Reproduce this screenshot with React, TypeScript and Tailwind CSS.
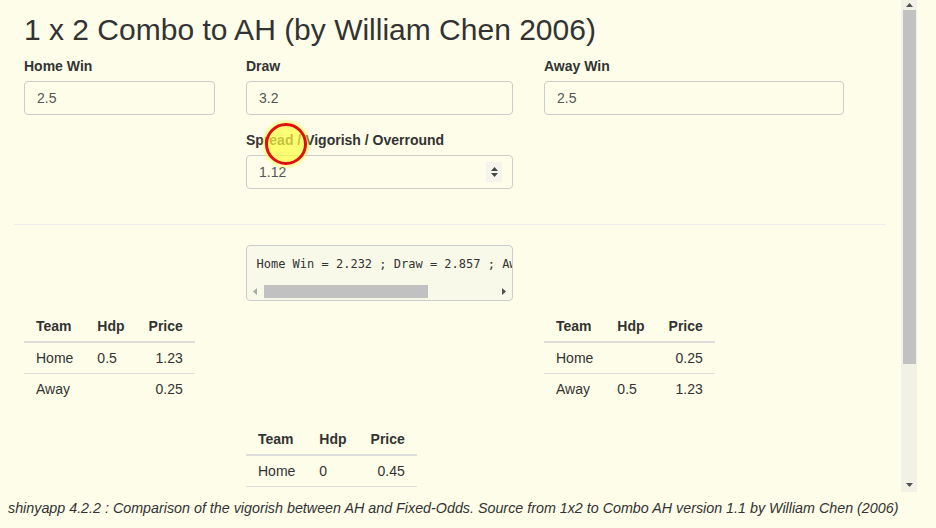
import React from "react";

type Row = [string, string, string];

const Label = ({ children }: { children: React.ReactNode }) => (
  <label className="block mb-[5px] text-[14px] leading-[20px] font-bold text-[#333]">
    {children}
  </label>
);

const TextInput = ({ value }: { value: string }) => (
  <input
    readOnly
    value={value}
    className="block h-[34px] w-full rounded-[4px] border border-[#ccc] bg-transparent px-[12px] text-[14px] text-[#555] outline-none"
  />
);

const Tri = ({ dir, color }: { dir: "up" | "down" | "left" | "right"; color: string }) => {
  const d = {
    up: "M0 4 L3.5 0 L7 4 Z",
    down: "M0 0 L3.5 4 L7 0 Z",
    left: "M4 0 L0 3.5 L4 7 Z",
    right: "M0 0 L4 3.5 L0 7 Z",
  }[dir];
  const w = dir === "up" || dir === "down" ? 7 : 4;
  const h = dir === "up" || dir === "down" ? 4 : 7;
  return (
    <svg width={w} height={h} viewBox={`0 0 ${w} ${h}`}>
      <path d={d} fill={color} />
    </svg>
  );
};

const OddsTable = ({ rows }: { rows: Row[] }) => (
  <table className="w-max self-start justify-self-start border-separate border-spacing-0 text-[14px] leading-[20px] text-[#333]">
    <thead>
      <tr>
        <th className="border-b-2 border-[#ddd] px-3 py-[5px] text-left font-bold">Team</th>
        <th className="border-b-2 border-[#ddd] px-3 py-[5px] text-left font-bold">Hdp</th>
        <th className="border-b-2 border-[#ddd] px-3 py-[5px] text-right font-bold">Price</th>
      </tr>
    </thead>
    <tbody>
      {rows.map((r, i) => (
        <tr key={i} className="h-[30px]">
          <td className={i > 0 ? "border-t border-[#ddd] px-3 py-[5px] text-left" : "px-3 py-[5px] text-left"}>
            {r[0]}
          </td>
          <td className={i > 0 ? "border-t border-[#ddd] px-3 py-[5px] text-left" : "px-3 py-[5px] text-left"}>
            {r[1]}
          </td>
          <td className={i > 0 ? "border-t border-[#ddd] px-3 py-[5px] text-right" : "px-3 py-[5px] text-right"}>
            {r[2]}
          </td>
        </tr>
      ))}
    </tbody>
  </table>
);

const App = () => {
  return (
    <div className="relative flex h-[528px] w-[936px] flex-col overflow-hidden bg-[#fdfde9] font-['Liberation_Sans',Arial,sans-serif] text-[#333]">
      <div className="flex h-[492px]">
        {/* page content */}
        <div className="w-[901px] overflow-hidden pl-[24px] pt-[13px]">
          <h2 className="text-[30px] leading-[33px] font-normal">1 x 2 Combo to AH (by William Chen 2006)</h2>

          <div className="mt-[10px] grid grid-cols-[191px_267px_300px] gap-x-[31px]">
            <div className="mb-[15px]">
              <Label>Home Win</Label>
              <TextInput value="2.5" />
            </div>
            <div className="mb-[15px]">
              <Label>Draw</Label>
              <TextInput value="3.2" />
            </div>
            <div className="mb-[15px]">
              <Label>Away Win</Label>
              <TextInput value="2.5" />
            </div>
          </div>

          <div className="grid grid-cols-[191px_267px_300px] gap-x-[31px]">
            <div />
            <div className="mb-[15px]">
              <Label>Spread / Vigorish / Overround</Label>
              <div className="flex h-[34px] items-center rounded-[4px] border border-[#ccc] pl-[12px] pr-[10px] text-[14px] text-[#555]">
                <span className="flex-1">1.12</span>
                <span className="flex h-[20px] w-[16px] flex-col items-center justify-center gap-[2px] bg-[#f4f4ec]">
                  <Tri dir="up" color="#444" />
                  <Tri dir="down" color="#444" />
                </span>
              </div>
            </div>
          </div>

          <hr className="my-[20px] ml-[-10px] w-[872px] border-t border-[#ececec]" />

          <div className="grid grid-cols-[191px_267px_300px] gap-x-[31px]">
            <div />
            <div className="mb-[10px] rounded-[4px] border border-[#ccc] bg-[#f9f9ea]">
              <div className="overflow-hidden whitespace-nowrap px-[9.5px] pt-[10px] pb-[10px] font-['DejaVu_Sans_Mono',monospace] text-[12px] leading-[17px] text-[#333]">
                Home Win = 2.232 ; Draw = 2.857 ; Away Win = 2.232
              </div>
              <div className="flex h-[17px] items-center">
                <div className="flex w-[16px] justify-center">
                  <Tri dir="left" color="#a8a8a8" />
                </div>
                <div className="ml-[1px] h-[13px] w-[164px] bg-[#c1c1c1]" />
                <div className="flex-1" />
                <div className="flex w-[16px] justify-center">
                  <Tri dir="right" color="#505050" />
                </div>
              </div>
            </div>
          </div>

          <div className="mb-[20px] grid grid-cols-[191px_267px_300px] gap-x-[31px]">
            <OddsTable
              rows={[
                ["Home", "0.5", "1.23"],
                ["Away", "", "0.25"],
              ]}
            />
            <div />
            <OddsTable
              rows={[
                ["Home", "", "0.25"],
                ["Away", "0.5", "1.23"],
              ]}
            />
          </div>

          <div className="grid grid-cols-[191px_267px_300px] gap-x-[31px]">
            <div />
            <OddsTable
              rows={[
                ["Home", "0", "0.45"],
                ["", "", ""],
              ]}
            />
          </div>
        </div>

        {/* vertical scrollbar */}
        <div className="flex w-[16px] flex-col bg-[#f1f1e6]">
          <div className="flex h-[9px] items-center justify-center">
            <Tri dir="up" color="#505050" />
          </div>
          <div className="ml-[2px] mr-[1px] mt-[1px] h-[354px] bg-[#c1c1c1]" />
          <div className="flex-1" />
          <div className="flex h-[14px] items-center justify-center">
            <Tri dir="down" color="#505050" />
          </div>
        </div>
        <div className="flex-1" />
      </div>

      <footer className="h-[36px] whitespace-nowrap pl-[8px] pt-[6px] text-[14.3px] leading-[20px] italic text-[#333]">
        shinyapp 4.2.2 : Comparison of the vigorish between AH and Fixed-Odds. Source from 1x2 to Combo AH version 1.1 by William Chen (2006)
      </footer>

      {/* click indicator */}
      <div className="absolute left-[265px] top-[123px] h-[42px] w-[42px] rounded-full border-[3px] border-[#e01010] bg-[#ffff40]/70 shadow-[0_0_3px_2px_rgba(255,255,80,0.7)]" />
    </div>
  );
};

export default App;
